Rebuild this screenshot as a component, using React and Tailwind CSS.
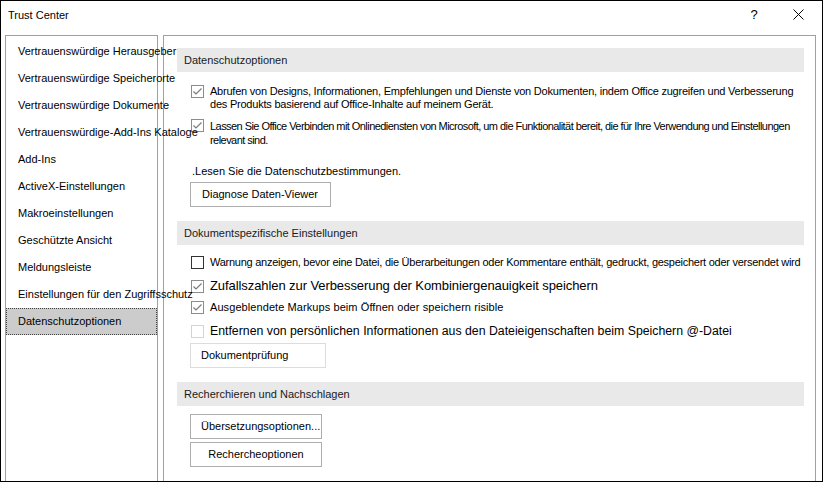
const navItems = [
  "Vertrauenswürdige Herausgeber",
  "Vertrauenswürdige Speicherorte",
  "Vertrauenswürdige Dokumente",
  "Vertrauenswürdige-Add-Ins Kataloge",
  "Add-Ins",
  "ActiveX-Einstellungen",
  "Makroeinstellungen",
  "Geschützte Ansicht",
  "Meldungsleiste",
  "Einstellungen für den Zugriffsschutz",
  "Datenschutzoptionen",
];

function Check({ checked, disabled, dark }) {
  const border = disabled ? "border-[#d4d4d4]" : dark ? "border-[#333333]" : "border-[#8c8c8c]";
  return (
    <div className={`w-[13px] h-[13px] shrink-0 border bg-white ${border} flex items-center justify-center`}>
      {checked && (
        <svg width="11" height="11" viewBox="0 0 11 11">
          <polyline points="1.5,5.5 4,8 9.5,2.5" fill="none" stroke="#7a7a7a" strokeWidth="1.2" />
        </svg>
      )}
    </div>
  );
}

function Header({ children }) {
  return (
    <div className="h-[24px] bg-[#e9e9e9] flex items-center pl-[7px] text-[11px] text-[#1a1a1a]">
      {children}
    </div>
  );
}

function Button({ children, className = "" }) {
  return (
    <div className={`h-[25px] border bg-white flex items-center text-[11px] text-black ${className}`}>
      {children}
    </div>
  );
}

export default function App() {
  return (
    <div
      className="w-[823px] h-[482px] border border-black bg-white flex flex-col overflow-hidden text-black"
      style={{ fontFamily: '"Liberation Sans", Arial, sans-serif' }}
    >
      <div className="h-[34px] shrink-0 flex items-start">
        <div className="pl-[7px] pt-[6px] text-[11px]">Trust Center</div>
        <div className="ml-auto flex items-start pt-[4px]">
          <div className="text-[13px] w-[44px] text-center">?</div>
          <div className="w-[44px] flex justify-center pt-[4px] mr-[2px]">
            <svg width="11" height="11" viewBox="0 0 11 11">
              <path d="M0.5 0.5 L10.5 10.5 M10.5 0.5 L0.5 10.5" stroke="#000" strokeWidth="1" />
            </svg>
          </div>
        </div>
      </div>

      <div className="flex flex-1 pl-[4px] pr-[6px] gap-[5px]">
        <div className="relative z-10 w-[153px] border border-b-0 border-[#a0a0a0] pt-[2px]">
          {navItems.map((item) => {
            const selected = item === "Datenschutzoptionen";
            return (
              <div
                key={item}
                className={`h-[27px] flex items-center whitespace-nowrap text-[11px] ${
                  selected ? "bg-[#cccccc] border border-dotted border-[#444] pl-[11px]" : "pl-[12px]"
                }`}
              >
                {item}
              </div>
            );
          })}
        </div>

        <div className="flex-1 border border-b-0 border-[#a0a0a0] pt-[12px] pl-[13px] pr-[11px]">
          <Header>Datenschutzoptionen</Header>

          <div className="flex gap-[6px] mt-[13px] pl-[14px]">
            <Check checked />
            <div className="leading-[13px] text-[11px] tracking-[-0.22px] whitespace-nowrap">
              Abrufen von Designs, Informationen, Empfehlungen und Dienste von Dokumenten, indem Office zugreifen und Verbesserung
              <br />
              des Produkts basierend auf Office-Inhalte auf meinem Gerät.
            </div>
          </div>

          <div className="flex gap-[6px] mt-[8px] pl-[14px]">
            <Check checked />
            <div className="leading-[14px] text-[11px] tracking-[-0.55px] whitespace-nowrap">
              Lassen Sie Office Verbinden mit Onlinediensten von Microsoft, um die Funktionalität bereit, die für Ihre Verwendung und Einstellungen
              <br />
              relevant sind.
            </div>
          </div>

          <div className="mt-[17px] pl-[15px] leading-[14px] text-[11px]">.Lesen Sie die Datenschutzbestimmungen.</div>

          <Button className="mt-[4px] ml-[13px] w-[141px] pl-[11px] border-[#adadad]">Diagnose Daten-Viewer</Button>

          <div className="mt-[14px]">
            <Header>Dokumentspezifische Einstellungen</Header>
          </div>

          <div className="flex items-center gap-[6px] mt-[10px] pl-[14px]">
            <Check dark />
            <div className="text-[11px] tracking-[-0.26px] leading-[14px] whitespace-nowrap">
              Warnung anzeigen, bevor eine Datei, die Überarbeitungen oder Kommentare enthält, gedruckt, gespeichert oder versendet wird
            </div>
          </div>

          <div className="flex items-center gap-[6px] mt-[9px] pl-[14px]">
            <Check checked />
            <div className="text-[13px] tracking-[-0.08px] leading-[16px] whitespace-nowrap">
              Zufallszahlen zur Verbesserung der Kombiniergenauigkeit speichern
            </div>
          </div>

          <div className="flex items-center gap-[6px] mt-[6px] pl-[14px]">
            <Check checked />
            <div className="text-[11px] tracking-[0.08px] leading-[15px] whitespace-nowrap">
              Ausgeblendete Markups beim Öffnen oder speichern risible
            </div>
          </div>

          <div className="flex items-center gap-[6px] mt-[8px] pl-[14px]">
            <Check disabled />
            <div className="text-[12.3px] leading-[16px] whitespace-nowrap">
              Entfernen von persönlichen Informationen aus den Dateieigenschaften beim Speichern @-Datei
            </div>
          </div>

          <Button className="mt-[4px] ml-[13px] w-[136px] pl-[10px] border-[#dcdcdc]">Dokumentprüfung</Button>

          <div className="mt-[14px]">
            <Header>Recherchieren und Nachschlagen</Header>
          </div>

          <Button className="mt-[8px] ml-[13px] w-[132px] pl-[10px] border-[#adadad]">Übersetzungsoptionen...</Button>
          <Button className="mt-[3px] ml-[13px] w-[132px] justify-center border-[#adadad]">Rechercheoptionen</Button>
        </div>
      </div>
    </div>
  );
}
